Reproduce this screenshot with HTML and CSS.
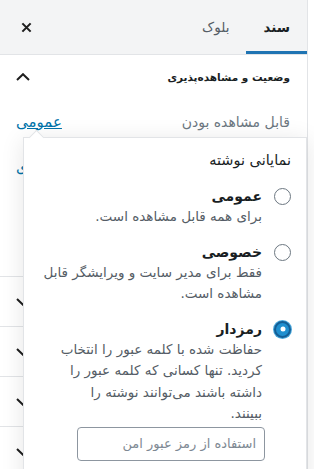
FILE: index.html
```html
<!DOCTYPE html>
<html lang="fa" dir="rtl">
<head>
<meta charset="utf-8">
<title>سند</title>
<link rel="stylesheet" href="styles.css">
</head>
<body>
<div class="sidebar">
  <div class="header">
    <div class="tabs">
      <button class="tab active">سند</button>
      <button class="tab">بلوک</button>
    </div>
    <button class="close" aria-label="بستن">
      <svg width="11" height="11" viewBox="0 0 12 12"><path d="M1.5 1.5 L10.5 10.5 M10.5 1.5 L1.5 10.5" stroke="#1e1e1e" stroke-width="2.3" fill="none"/></svg>
    </button>
  </div>

  <div class="panel open">
    <div class="panel-head">
      <span class="panel-title">وضعیت و مشاهده‌پذیری</span>
      <svg class="chev" width="14" height="8" viewBox="0 0 14 8"><path d="M1 7 L7 1.2 L13 7" stroke="#1e1e1e" stroke-width="2" fill="none"/></svg>
    </div>
    <div class="row">
      <span class="row-label">قابل مشاهده بودن</span>
      <a class="row-link" href="#">عمومی</a>
    </div>
    <div class="row">
      <span class="row-label">انتشار</span>
      <a class="row-link" href="#">فوری</a>
    </div>
  </div>

  <div class="panel closed"><div class="panel-head"><span class="panel-title">پیوند یکتا</span><svg class="chev" width="14" height="8" viewBox="0 0 14 8"><path d="M1 1 L7 6.8 L13 1" stroke="#1e1e1e" stroke-width="2" fill="none"/></svg></div></div>
  <div class="panel closed"><div class="panel-head"><span class="panel-title">دسته‌ها</span><svg class="chev" width="14" height="8" viewBox="0 0 14 8"><path d="M1 1 L7 6.8 L13 1" stroke="#1e1e1e" stroke-width="2" fill="none"/></svg></div></div>
  <div class="panel closed"><div class="panel-head"><span class="panel-title">برچسب‌ها</span><svg class="chev" width="14" height="8" viewBox="0 0 14 8"><path d="M1 1 L7 6.8 L13 1" stroke="#1e1e1e" stroke-width="2" fill="none"/></svg></div></div>
  <div class="panel closed"><div class="panel-head"><span class="panel-title">تصویر شاخص</span><svg class="chev" width="14" height="8" viewBox="0 0 14 8"><path d="M1 1 L7 6.8 L13 1" stroke="#1e1e1e" stroke-width="2" fill="none"/></svg></div></div>

  <div class="popover">
    <div class="pop-title">نمایانی نوشته</div>
    <div class="option">
      <span class="radio"></span>
      <div class="opt-body">
        <div class="opt-label">عمومی</div>
        <div class="opt-desc">برای همه قابل مشاهده است.</div>
      </div>
    </div>
    <div class="option">
      <span class="radio"></span>
      <div class="opt-body">
        <div class="opt-label">خصوصی</div>
        <div class="opt-desc">فقط برای مدیر سایت و ویرایشگر قابل مشاهده است.</div>
      </div>
    </div>
    <div class="option">
      <span class="radio checked"></span>
      <div class="opt-body">
        <div class="opt-label">رمزدار</div>
        <div class="opt-desc">حفاظت شده با کلمه عبور را انتخاب<br>کردید. تنها کسانی که کلمه عبور را<br>داشته باشند می‌توانند نوشته را<br>ببینند.</div>
        <input class="pass" type="text" placeholder="استفاده از رمز عبور امن">
      </div>
    </div>
  </div>
</div>
</body>
</html>
```

FILE: styles.css
```css
* { box-sizing: border-box; }
html, body { margin: 0; padding: 0; background: #fff; }
body {
  direction: rtl;
  font-family: "DejaVu Sans", "Noto Sans", sans-serif;
  color: #1e1e1e;
  overflow: hidden;
  height: 469px;
}
.sidebar {
  position: relative;
  width: 308px;
  height: 469px;
  border-right: 1px solid #e2e4e7;
  margin: 0 6px 0 0;
}
.header {
  height: 55px;
  background: #f3f4f5;
  border-bottom: 1px solid #e2e4e7;
  display: flex;
  justify-content: space-between;
  align-items: stretch;
}
.tabs { display: flex; }
.tab {
  background: none;
  border: 0;
  margin: 0;
  padding: 0 17px;
  font-family: inherit;
  font-size: 13.5px;
  color: #555d66;
  height: 54px;
}
.tab.active {
  font-weight: bold;
  color: #191e23;
  box-shadow: inset 0 -3px 0 #1f74b3;
}
.close {
  background: none;
  border: 0;
  width: 48px;
  padding: 0 0 0 21px;
  display: flex;
  align-items: center;
  justify-content: flex-start;
  direction: ltr;
}
.panel { border-bottom: 1px solid #e2e4e7; }
.panel.open { height: 222px; }
.panel.closed { height: 50px; }
.panel-head {
  display: flex;
  justify-content: space-between;
  align-items: center;
  padding: 0 17px 0 16px;
  height: 44px;
}
.closed .panel-head { height: 49px; }
.panel-title { font-size: 10.5px; font-weight: bold; color: #191e23; }
.chev { display: block; }
.row {
  display: flex;
  justify-content: space-between;
  align-items: center;
  padding: 0 17px 0 16px;
  height: 45px;
}
.row-label { font-size: 14px; color: #6c7781; }
.row-link { font-size: 15px; color: #0073aa; text-decoration: underline; }

.popover {
  position: absolute;
  top: 137px;
  right: 0;
  width: 284px;
  height: 360px;
  background: #fff;
  border: 1px solid #e2e4e7;
  box-shadow: 0 3px 22px rgba(0, 0, 0, 0.1);
  padding: 12px 15px 0 14px;
}
.popover::before {
  content: "";
  position: absolute;
  top: -6px;
  left: 7px;
  width: 10px;
  height: 10px;
  background: #fff;
  border-top: 1px solid #e2e4e7;
  border-left: 1px solid #e2e4e7;
  transform: rotate(45deg);
}
.pop-title {
  font-size: 14.5px;
  line-height: 20px;
  color: #191e23;
  margin-bottom: 16px;
}
.option {
  display: flex;
  align-items: flex-start;
  gap: 12px;
  margin-bottom: 14px;
}
.option:nth-of-type(3) { margin-top: 1px; }
.radio {
  flex: none;
  width: 17px;
  height: 17px;
  margin-top: 2px;
  border: 1.5px solid #6c7781;
  border-radius: 50%;
  position: relative;
}
.radio.checked {
  border: 2px solid #135e96;
  background: #1f8fcf;
  box-shadow: 0 0 0 1px #4aa8dc;
}
.radio.checked::after {
  content: "";
  position: absolute;
  width: 5px;
  height: 5px;
  border-radius: 50%;
  background: #fff;
  top: 50%;
  left: 50%;
  transform: translate(-50%, -50%);
}
.opt-body { width: 226px; }
.opt-label { font-size: 14px; font-weight: bold; line-height: 20px; color: #191e23; }
.opt-desc { font-size: 13.5px; line-height: 21.5px; color: #555d66; }
.pass {
  display: block;
  width: 188px;
  height: 34px;
  margin: 2px -3px 0 0;
  border: 1px solid #8d96a0;
  border-radius: 4px;
  font-family: inherit;
  font-size: 13px;
  padding: 0 8px;
  direction: rtl;
}
.pass::placeholder { color: #7e8993; }
```
